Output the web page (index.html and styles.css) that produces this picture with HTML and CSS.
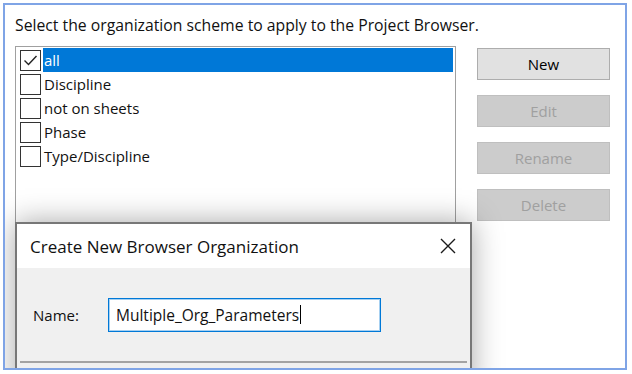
FILE: index.html
```html
<!DOCTYPE html>
<html lang="en">
<head>
    <meta charset="UTF-8">
    <title>Browser Organization</title>
    <link rel="stylesheet" href="styles.css">
</head>
<body>
    <div class="frame">
        <!-- prompt -->
        <p class="prompt">Select the organization scheme to apply to the Project Browser.</p>

        <div class="main">
            <!-- scheme list -->
            <div class="list">
                <div class="row selected">
                    <span class="box">
                        <svg width="19" height="19" viewBox="0 0 19 19"><path d="M3.5 9.5 L7.5 13.5 L15.5 5" fill="none" stroke="#222" stroke-width="1.4"/></svg>
                    </span>
                    <span class="label">all</span>
                </div>
                <div class="row"><span class="box"></span><span class="label">Discipline</span></div>
                <div class="row"><span class="box"></span><span class="label">not on sheets</span></div>
                <div class="row"><span class="box"></span><span class="label">Phase</span></div>
                <div class="row"><span class="box"></span><span class="label">Type/Discipline</span></div>
            </div>

            <!-- buttons -->
            <div class="buttons">
                <button class="btn">New</button>
                <button class="btn" disabled>Edit</button>
                <button class="btn" disabled>Rename</button>
                <button class="btn" disabled>Delete</button>
            </div>
        </div>

        <!-- new organization dialog -->
        <div class="dialog">
            <div class="title-bar">
                <span class="title">Create New Browser Organization</span>
                <svg class="close" width="16" height="16" viewBox="0 0 16 16"><path d="M1 1 L15 15 M15 1 L1 15" stroke="#1a1a1a" stroke-width="1.4"/></svg>
            </div>
            <div class="dialog-body">
                <span class="name-label">Name:</span>
                <div class="input">Multiple_Org_Parameters<span class="caret"></span></div>
            </div>
            <div class="dialog-foot"></div>
        </div>
    </div>
</body>
</html>
```

FILE: styles.css
```css
/* page */
body {
    margin: 0;
    background: #fff;
    font-family: 'Open Sans', 'Noto Sans', sans-serif;
    color: #111;
}

/* screenshot frame */
.frame {
    position: relative;
    margin: 3px;
    width: 620px;
    height: 363px;
    border: 2px solid #7fa4e6;
    background: #fff;
    overflow: hidden;
}

.prompt {
    margin: 0;
    padding: 10px 0 0 10px;
    font-size: 15.75px;
    line-height: 20px;
}

.main {
    display: flex;
    margin-top: 11px;
    padding-left: 10px;
}

/* list box */
.list {
    width: 441px;
    height: 200px;
    border: 1px solid #a0a0a0;
    padding: 1px 2px 0 4px;
    box-sizing: border-box;
}

.row {
    display: flex;
    align-items: center;
    height: 24px;
    font-size: 15px;
}

.box {
    width: 19px;
    height: 19px;
    border: 1px solid #333;
    background: #fff;
    flex: none;
    display: flex;
}

.label {
    flex: 1;
    margin-left: 2px;
    padding-left: 1px;
    line-height: 24px;
}

.row.selected .label {
    background: #0078d7;
    color: #fff;
}

/* side buttons */
.buttons {
    display: flex;
    flex-direction: column;
    gap: 15px;
    margin-left: 21px;
    margin-top: 2px;
}

.btn {
    width: 133px;
    height: 32px;
    font-family: inherit;
    font-size: 15px;
    color: #000;
    background: #e1e1e1;
    border: 1px solid #adadad;
    padding: 0;
}

.btn:disabled {
    background: #cccccc;
    border-color: #bfbfbf;
    color: #a0a0a0;
}

/* dialog on top */
.dialog {
    position: absolute;
    left: 10px;
    top: 217px;
    width: 457px;
    height: 170px;
    box-sizing: border-box;
    border: 2px solid #777;
    background: #f0f0f0;
    box-shadow: 0 0 28px rgba(0, 0, 0, 0.35);
}

.title-bar {
    display: flex;
    align-items: center;
    justify-content: space-between;
    height: 44px;
    padding: 0 14px 0 13px;
    background: #fff;
}

.title {
    font-size: 17px;
}

.dialog-body {
    display: flex;
    align-items: center;
    height: 93px;
    padding-left: 16px;
    box-sizing: border-box;
}

.name-label {
    width: 75px;
    font-size: 15px;
}

.input {
    display: flex;
    align-items: center;
    width: 273px;
    height: 34px;
    box-sizing: border-box;
    padding-left: 7px;
    border: 1px solid #0078d7;
    box-shadow: inset 0 0 0 1px rgba(0, 120, 215, 0.35);
    background: #fff;
    font-size: 15.5px;
}

.caret {
    width: 1px;
    height: 19px;
    background: #000;
    margin-left: 1px;
}

.dialog-foot {
    margin: 0 3px;
    border-top: 2px solid #a3a3a3;
}
```
